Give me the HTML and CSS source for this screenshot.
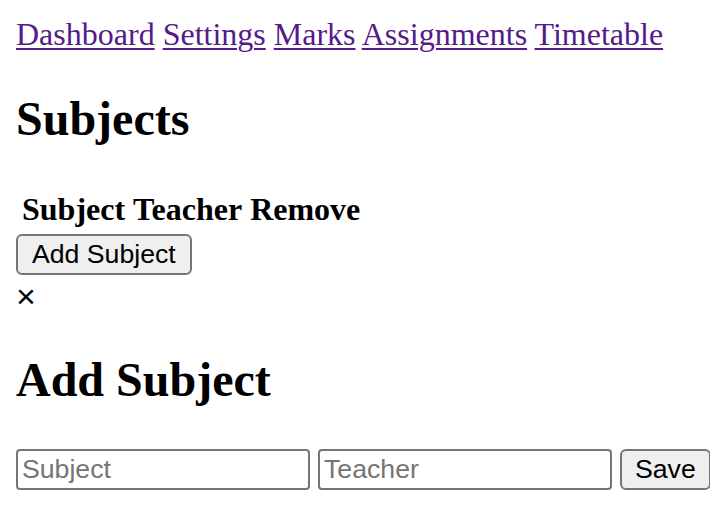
FILE: index.html
```html
<!DOCTYPE html>
<html>
<head>
<meta charset="utf-8">
<link rel="stylesheet" href="styles.css">
</head>
<body>
<nav class="nav">
  <a href="#" class="nav-link">Dashboard</a>
  <a href="#" class="nav-link">Settings</a>
  <a href="#" class="nav-link">Marks</a>
  <a href="#" class="nav-link">Assignments</a>
  <a href="#" class="nav-link">Timetable</a>
</nav>
<h2 class="title">Subjects</h2>
<table class="subjects">
  <thead>
    <tr><th class="col">Subject</th><th class="col">Teacher</th><th class="col">Remove</th></tr>
  </thead>
  <tbody></tbody>
</table>
<button class="btn">Add Subject</button>
<div class="modal">
  <div class="close">×</div>
  <h2 class="title title-modal">Add Subject</h2>
  <form class="form">
    <input class="field" type="text" placeholder="Subject">
    <input class="field" type="text" placeholder="Teacher">
    <button class="btn btn-save" type="button">Save</button>
  </form>
</div>
</body>
</html>
```

FILE: styles.css
```css
html {
  background: #ffffff;
}
body {
  margin: 16px;
  font-family: "Liberation Serif", "Times New Roman", serif;
  font-size: 32px;
  color: #000000;
}
.nav-link {
  color: #551a8b;
  text-decoration: underline;
  text-decoration-thickness: 2px;
  text-underline-offset: 3px;
}
.title {
  font-size: 48px;
  font-weight: bold;
  margin: 37.5px 0 39.8px;
}
.title-modal {
  margin: 35px 0 42px;
}
.subjects {
  border-spacing: 4px;
  margin: 0;
}
.col {
  padding: 2px;
  font-weight: bold;
  font-size: 32px;
}
.btn {
  font-family: "Liberation Sans", Arial, Helvetica, sans-serif;
  font-size: 26.67px;
  line-height: 33px;
  height: 41px;
  box-sizing: border-box;
  padding: 2px 14px;
  border: 2px solid #767676;
  border-radius: 6px;
  background: #efefef;
  color: #000000;
  margin: 0;
  vertical-align: baseline;
}
.btn-save {
  padding: 2px 13px;
}
.close {
  font-family: "Liberation Sans", Arial, sans-serif;
  font-size: 34px;
  line-height: 42px;
}
.form {
  margin: 0;
  white-space: nowrap;
}
.field {
  font-family: "Liberation Sans", Arial, Helvetica, sans-serif;
  font-size: 26.67px;
  line-height: 33px;
  width: 294px;
  height: 41px;
  box-sizing: border-box;
  padding: 2px 4px;
  border: 2px solid #767676;
  border-radius: 4px;
  background: #ffffff;
  margin: 0;
}
.field::placeholder {
  color: #757575;
}
```
